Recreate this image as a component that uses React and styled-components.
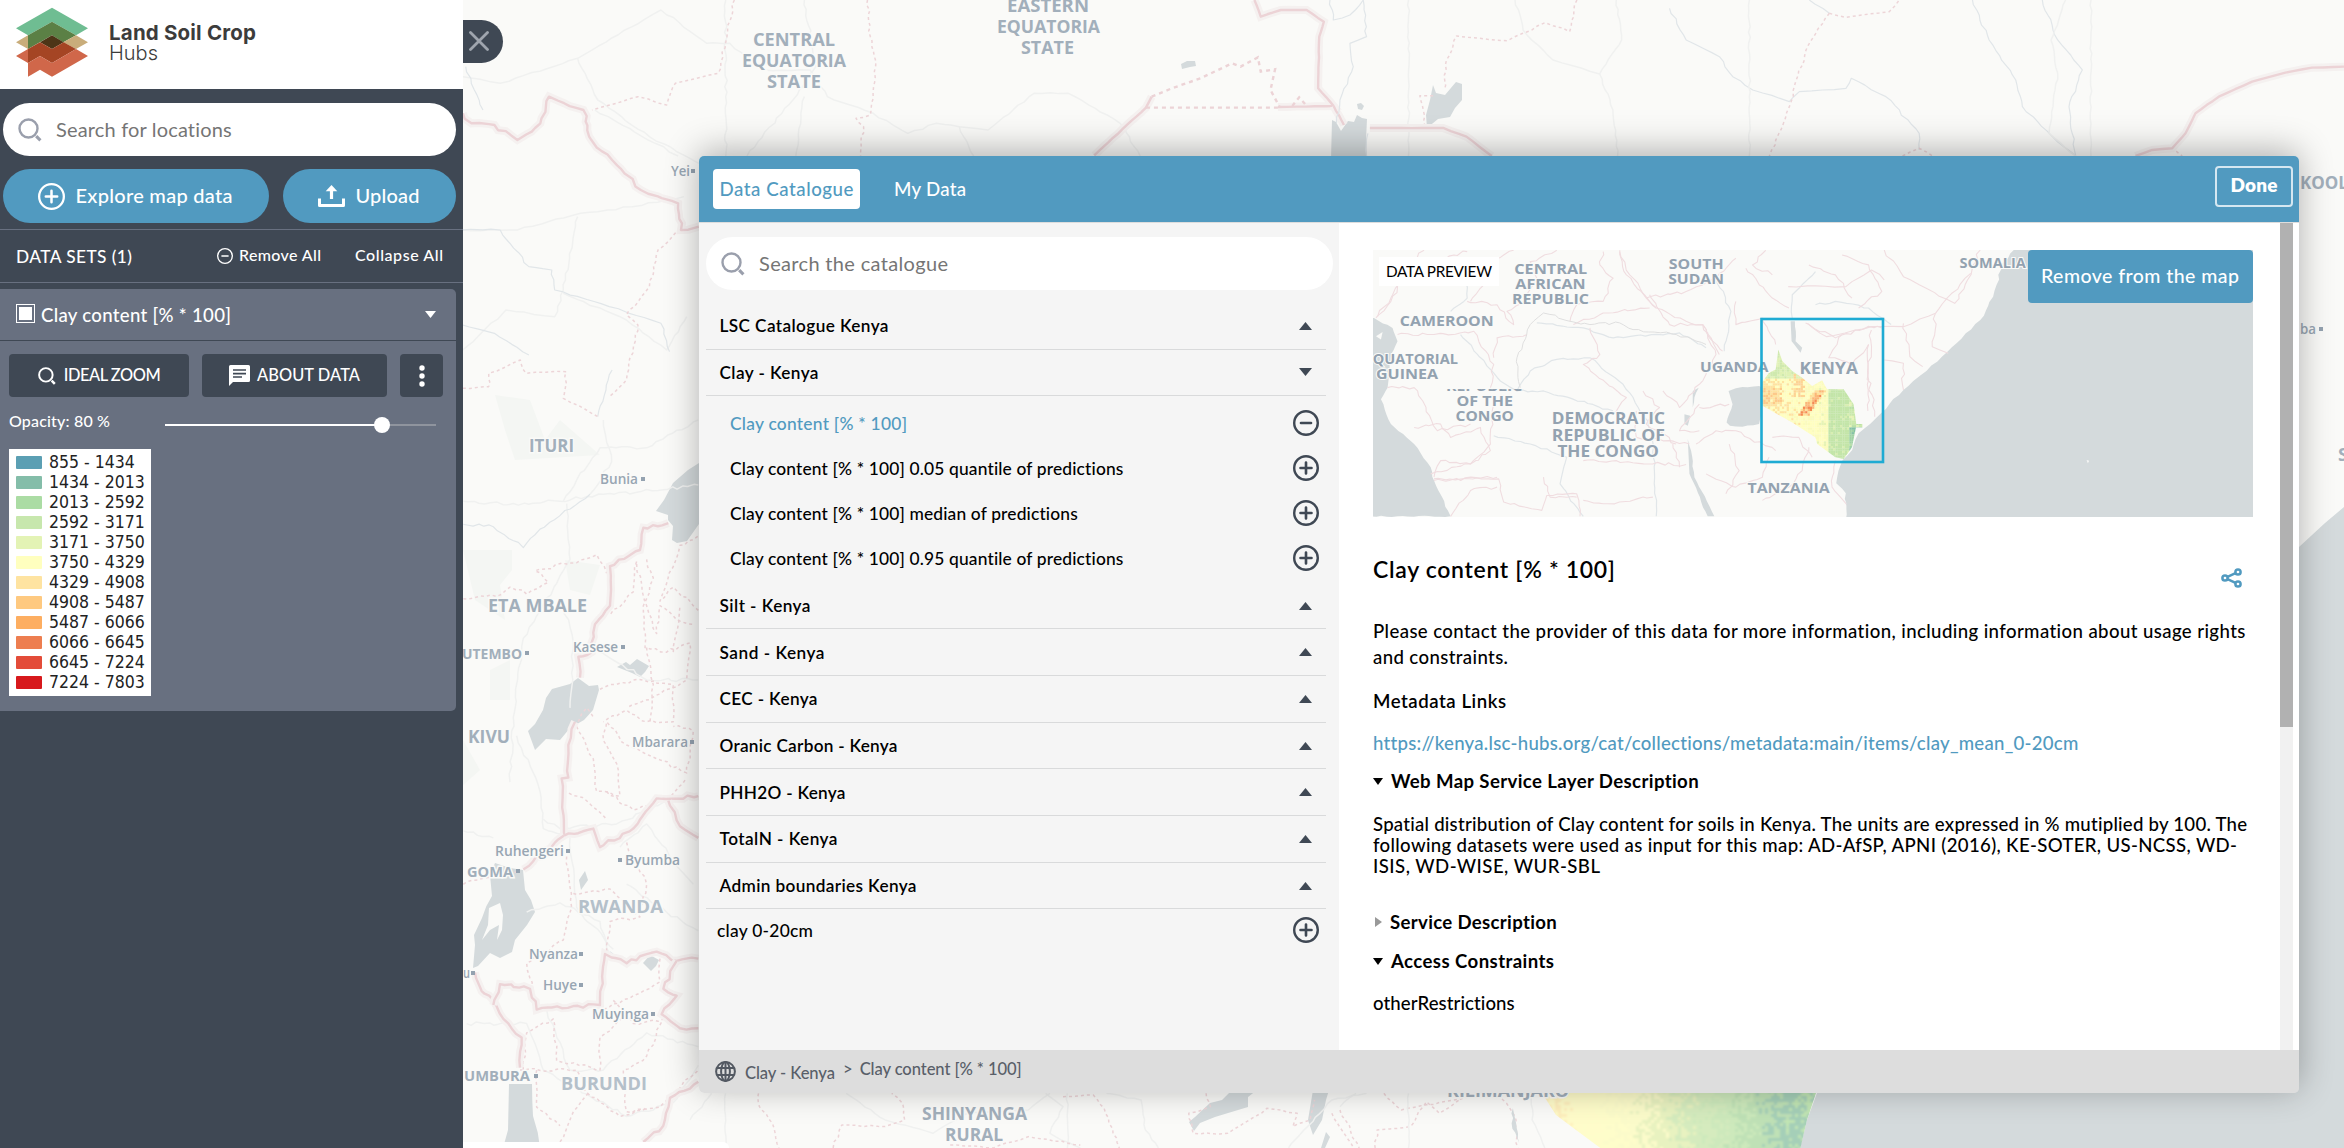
import React, { useLayoutEffect, useRef } from "react";
import styled, { createGlobalStyle, css } from "styled-components";

const Global = createGlobalStyle`
  html, body { margin: 0; padding: 0; }
  body { font-family: Lato, "Noto Sans", sans-serif; font-weight: 500; color: #000; background: #fafaf8; overflow: hidden; }
  * { box-sizing: border-box; }
  button { font: inherit; border: 0; margin: 0; padding: 0; background: none; color: inherit; cursor: pointer; }
`;

const slate = "#3f4854";
const blue = "#519ac0";

/* Text tracked so that it fills a given measure. */
const Line = styled.span`
  display: block;
  white-space: nowrap;
`;
function Fit({ w, children }) {
  const ref = useRef(null);
  useLayoutEffect(() => {
    const el = ref.current;
    const range = document.createRange();
    range.selectNodeContents(el);
    el.style.letterSpacing = "0px";
    const natural = range.getBoundingClientRect().width;
    el.style.letterSpacing = (w - natural) / Math.max(1, children.length - 1) + "px";
  }, [w, children]);
  return <Line ref={ref} style={{ width: w }}>{children}</Line>;
}

/* ---------- icons ---------- */
const Magnifier = ({ size = 24, color = "#9a9fac", sw = 2.4 }) => (
  <svg width={size} height={size} viewBox="0 0 24 24" fill="none" stroke={color} strokeWidth={sw}>
    <circle cx="10.5" cy="10.5" r="9" />
    <path d="M18.2 18.2 22.4 22.4" strokeWidth={sw * 1.3} />
  </svg>
);
const PlusCircle = ({ size = 26, color = slate, minus = false, sw = 2.4 }) => (
  <svg width={size} height={size} viewBox="0 0 26 26" fill="none" stroke={color} strokeWidth={sw}>
    <circle cx="13" cy="13" r={13 - sw / 2} />
    <path d={minus ? "M8 13H18" : "M7.5 13H18.5M13 7.5V18.5"} strokeLinecap="round" strokeWidth={sw * 1.1} />
  </svg>
);
const UploadIcon = () => (
  <svg width="27" height="23" viewBox="0 0 27 23" fill="none" stroke="#fff">
    <path d="M1.5 13.5V20.5H25.5V13.5" strokeWidth="3" strokeLinejoin="round" />
    <path d="M13.5 4V14" strokeWidth="3.2" />
    <path d="M13.5 0 19.3 6.2H7.7Z" fill="#fff" stroke="none" />
  </svg>
);
const Comment = () => (
  <svg width="21" height="21" viewBox="0 0 21 21">
    <path d="M1.5 0H19.5Q21 0 21 1.5V15.5Q21 17 19.5 17H4L0 21V1.5Q0 0 1.5 0Z" fill="#fff" />
    <path d="M4 5H17M4 8.6H17M4 12H13" stroke={slate} strokeWidth="1.7" />
  </svg>
);
const Dots = () => (
  <svg width="6" height="22" viewBox="0 0 6 22" fill="#fff">
    <circle cx="3" cy="3" r="2.7" /><circle cx="3" cy="11" r="2.7" /><circle cx="3" cy="19" r="2.7" />
  </svg>
);
const Tri = ({ dir = "up", w = 13, h = 8, color = slate }) => (
  <svg width={w} height={h} viewBox="0 0 10 10" preserveAspectRatio="none" fill={color}>
    <path d={{ up: "M0 10 5 0 10 10Z", down: "M0 0H10L5 10Z", right: "M0 0 10 5 0 10Z" }[dir]} />
  </svg>
);
const Globe = () => (
  <svg width="21" height="21" viewBox="0 0 21 21" fill="none" stroke="#535962" strokeWidth="2">
    <circle cx="10.5" cy="10.5" r="9.4" />
    <ellipse cx="10.5" cy="10.5" rx="4.4" ry="9.4" />
    <path d="M10.500 1V20M1.900 6.900H19.100M1.900 14.100H19.100" />
  </svg>
);
const Share = () => (
  <svg width="21" height="20" viewBox="0 0 21 20" fill="none" stroke={blue} strokeWidth="2.500">
    <circle cx="4" cy="10" r="2.600" /><circle cx="17" cy="4" r="2.600" /><circle cx="17" cy="16" r="2.600" />
    <path d="M6.500 8.800 14.500 5.200M6.500 11.200 14.500 14.800" />
  </svg>
);
const Cross = () => (
  <svg width="20" height="20" viewBox="0 0 20 20" stroke="#9fa5ae" strokeWidth="2.800" strokeLinecap="round">
    <path d="M1.500 1.500 18.500 18.500M18.500 1.500 1.500 18.500" />
  </svg>
);
const Logo = () => (
  <svg width="72" height="70" viewBox="48 22 216 210">
    <path fill="#6fbd92" d="M156 24 264 86 228 107 156 66 84 107 48 86Z" />
    <path fill="#5b8045" d="M156 66 228 107 190 128 156 107 84 148V107Z" />
    <path fill="#c9ad7b" d="M48 128 84 107V148ZM228 107 264 128 228 148 190 128Z" />
    <path fill="#4d3517" d="M156 107 191 128 156 148 120 128Z" />
    <path fill="#a54524" d="M120 128 156 148 191 128 228 148 156 190 120 169 84 190V148Z" />
    <path fill="#d0674a" d="M48 169 84 148V190ZM84 190 120 169 156 190 228 148 264 169 156 231 120 210 84 231Z" />
  </svg>
);

/* ---------- map drawing ---------- */
function random(seed) {
  let s = seed;
  return () => ((s = (s * 16807) % 2147483647) / 2147483647);
}
/* Breaks every segment of a line into small irregular steps. */
function rough(points, amount = 6, seed = 7) {
  const rnd = random(seed * 977 + points.length);
  const p = points.split(" ").map((s) => s.split(",").map(Number));
  let d = `M${p[0]}`;
  for (let i = 1; i < p.length; i++) {
    const [x0, y0] = p[i - 1];
    const [x1, y1] = p[i];
    const n = Math.max(1, Math.round(Math.hypot(x1 - x0, y1 - y0) / 16));
    for (let k = 1; k <= n; k++) {
      const j = k === n ? 0 : amount;
      d += `L${(x0 + ((x1 - x0) * k) / n + (rnd() - 0.5) * j).toFixed(1)} ${(y0 + ((y1 - y0) * k) / n + (rnd() - 0.5) * j).toFixed(1)}`;
    }
  }
  return d;
}
const lineKinds = {
  border: { stroke: "#ecd3d6", strokeWidth: 2.4 },
  halo: { stroke: "#f5f1f0", strokeWidth: 8 },
  region: { stroke: "#edd5d8", strokeWidth: 1.5, strokeDasharray: "3 3" },
  thin: { stroke: "#f0dde0", strokeWidth: 1.1 },
  river: { stroke: "#e1e6e9", strokeWidth: 1.2 },
  road: { stroke: "#f0f1f0", strokeWidth: 1.5 },
};
const Stroke = ({ kind, pts, amount }) =>
  pts.map((p, i) => (
    <React.Fragment key={i}>
      {kind === "border" && <path d={rough(p, amount, i + 3)} fill="none" vectorEffect="non-scaling-stroke" {...lineKinds.halo} />}
      <path d={rough(p, amount, i + 3)} fill="none" strokeLinejoin="round" vectorEffect="non-scaling-stroke" {...lineKinds[kind]} />
    </React.Fragment>
  ));
const Water = ({ pts, amount = 4 }) => pts.map((p, i) => <path key={i} d={rough(p, amount, i + 11) + "Z"} fill="#d4dadc" />);

const places = [
  ["CENTRAL", 753, 46, 82, 17], ["EQUATORIA", 742, 67, 104, 17], ["STATE", 767, 88, 54, 17],
  ["EASTERN", 1007, 12, 82, 17], ["EQUATORIA", 997, 33, 103, 17], ["STATE", 1021, 54, 53, 17],
  ["ITURI", 529, 452, 45, 17], ["ETA MBALE", 488, 612, 99, 17], ["KIVU", 468, 743, 42, 17],
  ["SHINYANGA", 922, 1120, 105, 17], ["RURAL", 945, 1141, 58, 17], ["KILIMANJARO", 1447, 1097, 122, 17],
  ["KOOL", 2300, 189, 48, 17], ["S", 2338, 461, 10, 17], ["GOMA", 467, 877, 46, 15],
  ["RWANDA", 578, 913, 85, 17], ["BURUNDI", 561, 1090, 86, 17], ["UTEMBO", 462, 659, 60, 15], ["UMBURA", 464, 1081, 66, 15],
];
const towns = [
  ["Yei", 671, 176, 19, 693], ["Bunia", 600, 484, 38, 643], ["Kasese", 573, 652, 45, 623], ["Mbarara", 632, 747, 56, 692],
  ["Ruhengeri", 495, 856, 69, 568], ["Byumba", 625, 865, 55, 620], ["Nyanza", 529, 959, 49, 581], ["Huye", 543, 990, 34, 581],
  ["Muyinga", 592, 1019, 57, 653], ["u", 463, 978, 7, 473], ["ba", 2300, 334, 16, 2321],
];
const squareOnly = [[518, 871], [527, 653], [536, 1076]];

function heat(x, y, r) {
  const scale = ["#fee3a0", "#fffec0", "#fbfbbc", "#e6f3b4", "#c9e8aa", "#b9e0a6", "#9fd2a4", "#84c1a6"];
  const ridge = Math.abs((x - 0.49) + (y - 0.47) * 0.75);
  if (y > 0.36 && y < 0.6 && ridge < 0.055) return r > 0.75 ? "#f58a52" : r > 0.35 ? "#fbb777" : "#fee09a";
  if (x < 0.2 && y > 0.35 && y < 0.5 && r > 0.7) return "#fdc98a";
  if (x > 0.3 && x < 0.42 && y < 0.42 && r > 0.5) return "#fdd494";
  if (y < 0.26) return r > 0.5 ? "#cfe9ae" : "#dff1b4";
  if (x > 0.64 && x < 0.86) return r > 0.85 ? "#d8eeb0" : "#c3e5a8";
  const v = x * 3.2 + (r - 0.5) * 1.6 + (x > 0.83 ? (y > 0.7 ? 3.4 : 1.2) : 0);
  return scale[Math.max(0, Math.min(7, Math.round(v)))];
}
const Cells = ({ x, y, w, h, size, fn }) => {
  const rnd = random(4242);
  const out = [];
  for (let j = 0; j < h / size; j++)
    for (let i = 0; i < w / size; i++)
      out.push(<rect key={i + "-" + j} x={x + i * size} y={y + j * size} width={size + 0.4} height={size + 0.4} fill={fn((i * size) / w, (j * size) / h, rnd())} />);
  return out;
};
const coast = (x, y, r) => {
  const scale = ["#feeebc", "#fffcca", "#fefdca", "#fbfbca", "#e8f2c0", "#d5ebbe", "#cde9bc", "#bfe1b6", "#a5cfb8", "#c2e6b4"];
  return scale[Math.max(0, Math.min(9, Math.round(x * 9 + (r - 0.5) * 1.3)))];
};

const MapSvg = styled.svg`
  display: block;
  font-family: "Open Sans", Lato, sans-serif;
`;
const BaseMap = () => (
  <MapSvg width="1881" height="1148" viewBox="463 0 1881 1148">
    <defs>
      <clipPath id="coastClip"><path d="M1540 1090 1556 1115 1576 1130 1603 1150H1800L1807 1120 1817 1090Z" /></clipPath>
      <filter id="soft"><feGaussianBlur stdDeviation="0.9" /></filter>
    </defs>
    <rect x="463" width="1881" height="1148" fill="#fafaf8" />
    <g fill="#f4f6f3">
      <path d="M495 395 530 400 545 440 560 420 600 455 515 460 505 430Z" />
      <path d="M463 550H512V570L500 585 505 620 475 600Z" />
      <path d="M490 670 510 660V700H490ZM463 740 480 770 463 785Z" />
      <path d="M565 560 600 565 590 595 570 590Z" />
    </g>
    <Water amount={3} pts={[
      "699,463 688,470 673,483 664,500 656,511 668,515 668,520 673,526 672,540 677,543 687,541 699,524",
      "528,731 535,750 546,739 560,740 570,728 584,720 593,710 599,690 598,685 589,686 578,678 570,684 552,689 546,698 543,710 535,724",
      "617,667 626,662 630,665 637,659 649,666 645,672 640,677 632,673",
      "495,863 510,868 523,870 525,890 535,912 527,925 515,940 512,952 500,958 490,953 478,966 473,968 475,945 474,935 482,918 492,896 490,875",
      "509,1084 532,1084 533,1116 540,1148 503,1148 508,1130",
    ]} />
    <Water amount={1} pts={[
      "1332,120 1336,122 1341,131 1348,121 1354,122 1357,115 1362,118 1367,119 1366,140 1367,160 1331,160",
      "1433,85 1436,93 1445,95 1456,82 1462,84 1462,100 1455,108 1450,117 1438,119 1427,128 1426,115 1430,100",
      "1189,1122 1195,1117 1210,1103 1222,1100 1232,1090 1257,1090 1248,1097 1248,1107 1215,1117 1200,1123 1194,1131",
      "1313,1090 1329,1090 1326,1100 1322,1120 1313,1135 1308,1120", "1326,1132 1330,1137 1325,1148 1321,1148", "1181,64 1187,61 1195,61 1196,66 1190,67 1182,69",
      "643,963 650,955 659,960 656,966 651,971", "579,880 585,871 588,880 581,890", "1357,104 1361,103 1364,106 1362,110 1358,109",
    ]} />
    <path d="M2344 507 2325 523 2299 547 2100 700 1870 950 1817 1093 1807 1120 1800 1148H2344Z" fill="#d4dadc" />
    <g fill="#fafaf8"><path d="M489 908 500 903 503 915 502 930 497 940 499 925 490 930 482 940 488 925Z" /></g>

    <g transform="translate(460 0) scale(.574 .3333)">
      <Stroke kind="road" amount={5} pts={[
        "5,230 70,250 205,175 300,80 350,30 430,130 470,130 530,210 610,210 640,290 720,340 780,400 830,370 870,380 920,390 1000,280 1060,280 1150,370 1185,468",
        "205,175 240,300 330,410 416,490", "235,330 340,430 380,468", "463,0 463,468", "600,0 620,200 580,300 500,468", "600,290 585,468", "870,380 895,468",
        "5,690 100,690 210,640 300,620 390,590", "205,650 180,870 165,950 80,930 5,1050", "180,880 290,960 360,1050 395,950",
      ]} />
      <Stroke kind="river" amount={5} pts={["10,200 25,270 40,330", "5,690 70,690 120,800 160,810 165,870 260,920 350,970 365,1055", "5,975 60,1000 120,1065", "265,1110 240,1250"]} />
      <Stroke kind="region" amount={5} pts={[
        "478,0 465,110 450,220 375,250 360,315 310,290 230,330", "710,0 715,110 724,200 715,345 690,355 703,380 698,468",
        "385,690 345,750 330,860 290,945 310,975 290,1140 260,1190", "5,1165 50,1160 50,1120 105,1080 115,1120 185,1115 180,1195 240,1250",
      ]} />
      <Stroke kind="border" amount={9} pts={["5,340 20,370 60,375 100,420 125,395 140,370 155,290 215,330 225,410 265,480 315,570 380,610 385,690 416,680"]} />
      <Stroke kind="border" amount={1} pts={["1105,466 1195,323 1205,290", "1425,321 1522,318 1495,265 1497,110 1505,65 1475,30 1430,30 1395,50 1384,0", "1522,318 1540,375"]} />
      <g fill="none" stroke="#ecd3d6" strokeWidth="2.400" strokeDasharray="4 4">
        <path vectorEffect="non-scaling-stroke" d="M1195 323H1425M1205 290 1240 265 1290 235 1345 190 1360 200 1390 172 1395 215 1420 208 1412 270 1428 321M1450 318 1462 292 1475 318" />
      </g>
    </g>

    <g transform="translate(1300 0) scale(.6658 .3333)">
      <Stroke kind="river" amount={4} pts={[
        "45,0 50,60 75,45 95,0 100,110 75,130 80,200 60,300 55,370", "555,25 580,120 630,170 650,230 680,270 735,305 750,275 820,265 828,235 880,290 930,400 930,450",
        "1010,0 1035,120 1075,240 1085,320 1130,410 1165,468", "1115,0 1138,120 1175,210 1155,320 1165,468", "765,0 795,40", "100,468 102,400",
      ]} />
      <Stroke kind="road" amount={3} pts={["323,0 335,90 380,180 450,222 470,330 477,468", "475,0 483,120 450,222", "163,0 163,468", "675,0 675,468", "1188,0 1188,468", "1150,0 1128,120 1138,220 1125,400 1165,468"]} />
      <Stroke kind="region" amount={4} pts={["416,0 405,95 368,68 312,122 235,108 220,180 217,270", "795,40 760,150 735,320 705,468", "200,287 180,287 188,380", "795,40 820,52 885,35 900,0", "905,468 930,445 950,468", "1310,440 1325,468"]} />
      <Stroke kind="border" amount={1} pts={["105,384 215,384 250,410 288,468", "1255,468 1280,450 1310,445 1330,400 1345,340 1380,290 1430,245 1480,218 1520,203 1568,200"]} />
    </g>

    <g transform="translate(460 420) scale(.3333 .4643)">
      <Stroke kind="road" amount={8} pts={[
        "10,175 160,180 300,175 430,160 610,150 715,140", "310,175 420,60 560,60 715,0", "430,0 455,90 390,160", "150,780 160,640 190,470 240,410 330,300 320,180",
        "310,400 340,480 330,620", "420,500 560,560 715,560", "250,860 300,880 470,870 620,820", "330,900 350,1050 460,1140", "500,1000 620,1060 715,1100",
        "20,1300 200,1300 250,1400 500,1500 640,1470 715,1390", "170,680 240,800 250,880 320,900", "480,920 560,870 700,1000", "200,1060 300,1040 420,1080 450,1150", "260,1270 330,1400 430,1400 560,1320 715,1350", "10,885 100,900",
      ]} />
      <Stroke kind="river" amount={8} pts={["10,225 100,230 190,275 240,235 390,160", "450,1145 520,1170 560,1150 600,1150"]} />
      <Stroke kind="region" amount={8} pts={[
        "10,385 110,380 150,360 200,375 265,350 225,325 320,310 410,290 440,330", "530,305 520,370 450,420", "530,310 560,400 590,460 600,400 650,430 700,440",
        "715,410 640,360 600,390 660,270 715,250", "560,300 580,340 550,400 555,490 620,500 690,480 680,560 600,590 500,620", "420,580 520,560 640,570 640,650 560,650 500,625 430,650",
        "350,660 400,730 410,800 480,810 470,740 430,690 440,650 500,700 560,720 680,760 700,670 640,660", "310,800 380,820 440,860", "440,800 520,840 620,820 680,770",
        "10,1000 180,970", "320,940 335,1050 310,1120 200,1170 230,1270", "340,1020 450,1010 540,1070 450,1080 440,1150", "500,910 560,1000 540,1060",
        "600,1160 600,1210 520,1240 430,1270", "460,1250 520,1300 610,1290 560,1370 490,1400 500,1490 600,1480 715,1400", "190,1400 200,1320 280,1290 290,1380 420,1400 420,1330 500,1280",
        "180,1400 350,1400 400,1440 340,1490 300,1555", "370,1440 480,1500 560,1480", "230,1400 230,1480 300,1520", "355,650 380,620 400,640", "640,500 660,400", "560,490 580,570 570,650",
      ]} />
      <Stroke kind="border" amount={8} pts={[
        "625,222 550,232 540,280 450,315 450,400 405,440 395,500 355,510 360,555", "345,650 325,700 325,770 305,772 312,895 400,880 420,920 520,880 590,815 715,810", "312,895 190,968", "625,820 660,875 715,900",
        "45,1190 65,1230 100,1250 130,1290 185,1330 180,1395", "100,1260 120,1215 210,1225 230,1270 420,1260 435,1150 500,1170 540,1155 590,1145 650,1165 715,1160", "650,1165 610,1225 650,1240 605,1280 660,1310 715,1310", "550,1555 610,1520 630,1460 715,1425",
      ]} />
    </g>

    <g transform="translate(690 700) scale(.4337 .3333)">
      <Stroke kind="road" amount={5} pts={["0,1260 50,1180", "360,1180 450,1260 560,1300 640,1240 780,1230 830,1180", "820,1180 860,1220 830,1300 900,1344", "960,1180 1040,1200 1050,1290 1080,1344", "1380,1344 1480,1200 1560,1180", "82,1180 82,1344", "870,1180 870,1344"]} />
      <Stroke kind="region" amount={5} pts={["158,1180 160,1220 190,1270 205,1344", "330,1344 350,1275 450,1280 495,1260 490,1210 465,1180", "600,1335 700,1344 780,1310 900,1335", "860,1190 930,1185 955,1225 990,1344", "1190,1180 1200,1220 1150,1240 1160,1300 1240,1300 1330,1225 1400,1240 1390,1280 1430,1260 1440,1200", "1480,1240 1530,1344", "1600,1180 1640,1230 1760,1200 1840,1180"]} />
    </g>
    <g transform="translate(1340 860) scale(.6403 .3333)">
      <Stroke kind="region" amount={5} pts={["0,750 30,864", "55,864 58,810 110,800 135,725 155,760 190,715", "250,700 275,780 278,864"]} />
      <Water pts={["270,745 268,790 280,850 275,790"]} />
      <Stroke kind="road" amount={3} pts={["300,700 300,780 320,864", "107,700 107,864", "0,740 25,700"]} />
    </g>
    <g clipPath="url(#coastClip)" filter="url(#soft)">
      <Cells x={1540} y={1090} w={278} h={60} size={3} fn={coast} />
    </g>

    <g fontWeight="700" fill="#a6b2bd" stroke="#fafaf8" strokeWidth="3" paintOrder="stroke">
      {places.map(([t, x, y, w, s], i) => (
        <text key={i} x={x} y={y} textLength={w} lengthAdjust="spacingAndGlyphs" fontSize={s} fill={t === "RWANDA" || t === "BURUNDI" ? "#b4c0ca" : "#a2afbb"}>{t}</text>
      ))}
      {towns.map(([t, x, y, w]) => (
        <text key={t} x={x} y={y} textLength={w} lengthAdjust="spacingAndGlyphs" fontSize="14" fontWeight="600" fill="#98a6b3">{t}</text>
      ))}
    </g>
    <g fill="#94a2b0">
      {towns.map(([t, , y, , d]) => <rect key={t} x={d - 2} y={y - 7} width="4" height="4" />)}
      {squareOnly.map(([x, y]) => <rect key={x} x={x - 2} y={y - 2} width="4" height="4" />)}
    </g>
  </MapSvg>
);

const previewPlaces = [
  ["CENTRAL", 432, 87, 220, 42], ["AFRICAN", 435, 132, 212, 42], ["REPUBLIC", 425, 178, 232, 42], ["SOUTH", 898, 72, 165, 42], ["SUDAN", 896, 118, 168, 42],
  ["CAMEROON", 87, 243, 283, 42], ["QUATORIAL", 5, 360, 257, 42], ["GUINEA", 15, 405, 187, 42], ["OF THE", 258, 485, 170, 42], ["CONGO", 255, 530, 176, 42],
  ["DEMOCRATIC", 545, 540, 341, 46], ["REPUBLIC OF", 545, 590, 341, 46], ["THE CONGO", 562, 640, 306, 46], ["UGANDA", 992, 384, 206, 42],
  ["KENYA", 1292, 388, 176, 48], ["TANZANIA", 1135, 747, 248, 42], ["SOMALIA", 1774, 70, 200, 42],
];
const PreviewSvg = styled(MapSvg)`
  flex: none;
`;
const PreviewMap = () => (
  <PreviewSvg width="880" height="267" viewBox="0 0 880 267">
    <defs>
      <clipPath id="clayClip"><path d="M1228 315 1240 350 1270 380 1300 400 1330 425 1360 408 1375 435H1425L1455 480 1463 540H1482V550H1462L1450 610 1425 645 1400 640 1345 600 1340 580 1270 535 1180 485 1178 415 1200 385 1220 375Z" /></clipPath>
      <clipPath id="cutClip"><rect x="200" y="434" width="300" height="8" /></clipPath>
      <filter id="softer"><feGaussianBlur stdDeviation="1.600" /></filter>
    </defs>
    <rect width="880" height="267" fill="#fafaf8" />
    <g transform="translate(-2 -5) scale(.3317)">
      <Water pts={["9,220 65,250 80,290 60,330 50,430 30,465 60,540 130,600 180,670 190,710 240,818 0,818 0,220", "1078,440 1100,432 1170,425 1180,430 1182,480 1170,540 1120,548 1082,545 1072,535 1090,480", "955,585 965,620 975,700 1035,818 1015,818 960,690", "945,510 962,515 955,545 945,540", "1265,230 1278,230 1280,290 1300,310 1295,325 1268,290", "970,440 988,430 975,460 970,490"]} />
      <path d="M15 275 35 262 30 285Z" fill="#fafaf8" />
      <Stroke kind="river" amount={7} pts={["440,440 480,380 560,345 660,340 760,420 850,560 855,700 860,818", "500,235 640,250 730,280 845,270 930,265 1010,310", "370,575 480,600 590,640 570,720 640,818", "270,270 390,410 440,440 520,440 730,500", "240,200 290,160 290,100", "1040,100 1085,200 1065,320", "1340,180 1400,170 1500,190 1568,240", "1270,220 1270,150 1340,80"]} />
      <Stroke kind="thin" amount={10} pts={[
        "15,220 60,170 90,110 170,100 200,60 250,30 290,20", "300,170 340,120 330,60 400,30 430,16", "470,160 500,100 480,50 560,16", "600,230 620,180 700,170 730,100 690,60 700,20",
        "290,170 380,180 430,240 410,200 470,170", "80,270 190,270 310,260 370,360 360,430", "370,340 380,280 470,270", "660,250 690,330 640,360 770,460 730,510", "820,440 870,490 830,540 920,600",
        "1000,240 1040,330 990,420 930,490 880,440", "840,150 900,240 1000,240 1030,290 1060,320", "830,160 950,140 1040,100 1100,40", "1100,170 1100,240 1180,220", "1130,70 1200,150 1260,190", "1190,16 1150,60 1210,90",
        "50,430 130,430 200,560 300,540", "130,550 210,540 240,580 330,550 360,620 300,660 180,690", "190,710 380,700", "240,818 300,740 380,730", "640,650 950,662", "800,500 800,580 960,600", "910,600 930,670",
        "990,490 1080,480", "980,600 1040,560 1100,560 1220,620", "1010,690 1100,730 1180,700 1200,640", "1070,750 1110,680 1080,600", "1180,770 1260,730 1300,680 1320,610", "1400,650 1390,730 1440,790", "1210,580 1290,580 1330,640", "640,770 700,780 850,760",
        "1420,30 1500,60 1540,140 1470,190", "1320,60 1400,90 1450,160", "750,20 780,90 830,160 860,190", "1420,270 1380,340 1450,360 1500,300", "520,700 540,760 620,760",
      ]} />
      <g stroke="#ebd0d4">
        <Stroke kind="thin" amount={9} pts={["20,215 60,160 110,60 160,16", "750,16 770,90 860,190 950,230 1000,240 1050,330", "610,240 700,205 840,190", "190,705 385,705 400,775 515,800 530,755 620,750 630,818", "190,700 210,650 300,660 360,600 370,480", "1180,220 1220,300", "1310,235 1400,280 1500,245 1540,250", "1500,300 1498,500", "990,480 930,560 990,560"]} />
      </g>
      <path d={rough("450,430 440,340 480,240 520,205 600,230 660,240 750,235 790,255 920,270 1010,300", 8)} fill="none" stroke="#dfdfdf" strokeWidth="3" />
    </g>
    <g transform="translate(-33 -110) scale(.6403 .3333)">
      <Water pts={["1055,325 1035,370 1020,470 1000,540 940,650 880,750 845,820 810,880 800,930 785,960 775,1030 790,1060 790,1140 1430,1140 1430,325"]} />
      <Stroke kind="thin" amount={6} pts={["850,330 880,410 960,490 980,420 1000,330", "730,550 760,590 830,560 880,560 930,520 985,400", "830,570 825,700 835,830", "880,550 890,650 910,680", "930,520 925,620 950,640", "850,660 880,670 880,750", "700,440 790,440 830,390 850,420"]} />
      <path d="M1166 960 1170 962 1168 970Z" fill="#fafaf8" />
    </g>
    <g transform="translate(-2 -5) scale(.3317)">
      <g clipPath="url(#clayClip)"><g filter="url(#softer)"><Cells x={1176} y={312} w={308} h={336} size={7} fn={heat} /></g></g>
    </g>
    <g transform="translate(-2 -5) scale(.3317)" fontWeight="700" fill="#93a2b0" stroke="#fafaf8" paintOrder="stroke">
      {previewPlaces.map(([t, x, y, w, s], i) => <text key={i} x={x} y={y} textLength={w} lengthAdjust="spacingAndGlyphs" fontSize={s} strokeWidth={t === "KENYA" ? 0 : 6}>{t}</text>)}
      <text x="226" y="439" textLength="230" lengthAdjust="spacingAndGlyphs" fontSize="42" clipPath="url(#cutClip)">REPUBLIC</text>
    </g>
    <rect x="388.500" y="69" width="121.500" height="143" fill="none" stroke="#1fabd3" strokeWidth="2.600" />
  </PreviewSvg>
);

/* ---------- layout ---------- */
const Page = styled.div`
  display: flex;
  width: 2344px;
  height: 1148px;
  overflow: hidden;
`;
const Sidebar = styled.aside`
  width: 463px;
  flex: none;
  background: ${slate};
  color: #fff;
`;
const Brand = styled.header`
  display: flex;
  height: 89px;
  padding: 7px 0 0 16px;
  gap: 21px;
  background: #fff;
  color: #3c3c3b;
`;
const BrandName = styled.div`
  padding-top: 15px;
  line-height: 21px;
  font-family: Inter, Lato, sans-serif;
`;
const Bold = styled.div`
  font-weight: 700;
  font-size: 20.500px;
`;
const Light = styled.div`
  font-weight: 300;
  font-size: 20px;
`;
const SearchBox = styled.div`
  display: flex;
  align-items: center;
  height: 53px;
  gap: 14px;
  padding-left: 15px;
  border-radius: 27px;
  background: #fff;
  color: #757575;
  font-size: 20px;
  font-weight: 400;
  margin: ${(p) => p.$margin};
  ${Line} { padding-bottom: 2px; }
`;
const Actions = styled.div`
  display: flex;
  gap: 14px;
  margin: 13px 7px 6px 3px;
`;
const Pill = styled.button`
  display: flex;
  align-items: center;
  justify-content: center;
  gap: 11px;
  width: ${(p) => p.$w}px;
  height: 54px;
  padding-right: 2px;
  border-radius: 27px;
  background: ${blue};
  font-size: 20px;
  ${Line} { padding-bottom: 2px; }
`;
const DataHead = styled.div`
  display: flex;
  align-items: center;
  height: 54px;
  padding: 0 20px 0 16px;
  border-top: 1px solid #687080;
  border-bottom: 1px solid #687080;
  font-size: 17.300px;
`;
const HeadAction = styled.button`
  display: flex;
  align-items: center;
  gap: 6px;
  margin-left: ${(p) => p.$ml}px;
  font-size: 16px;
  ${Line} { padding-bottom: 3px; }
`;
const Card = styled.section`
  width: 456px;
  height: 422px;
  margin-top: 6px;
  border-radius: 0 5px 5px 0;
  background: #687080;
`;
const CardHead = styled.div`
  display: flex;
  align-items: center;
  height: 52px;
  padding: 0 20px 0 16px;
  border-bottom: 1px solid ${slate};
  font-size: 18.600px;
`;
const Check = styled.span`
  width: 19px;
  height: 19px;
  margin: 0 6px 3px 0;
  border: 1.500px solid #fff;
  padding: 2px;
  &::before { content: ""; display: block; height: 100%; background: #fff; }
`;
const Push = styled.span`
  margin-left: auto;
  display: flex;
`;
const CardActions = styled.div`
  display: flex;
  gap: 13px;
  padding: 13px 9px 0;
`;
const DarkButton = styled.button`
  display: flex;
  align-items: center;
  justify-content: center;
  gap: ${(p) => p.$gap || 0}px;
  width: ${(p) => p.$w}px;
  height: 43px;
  border-radius: 4px;
  background: ${slate};
  font-size: 16.400px;
  ${Line} { padding-bottom: 2px; }
`;
const OpacityRow = styled.div`
  display: flex;
  align-items: center;
  height: 52px;
  padding-left: 9px;
  font-size: 16px;
`;
const OpacityLabel = styled.div`
  width: 156px;
  padding-bottom: 5px;
`;
const Slider = styled.div`
  position: relative;
  width: 271px;
  height: 2px;
  margin-top: 4px;
  background: linear-gradient(90deg, #fff 80%, #8f949e 80%);
  &::after { content: ""; position: absolute; left: 209px; top: -7px; width: 16px; height: 16px; border-radius: 50%; background: #fff; }
`;
const Legend = styled.div`
  width: 142px;
  height: 247px;
  margin-left: 9px;
  padding: 3px 0 0 7px;
  background: #fff;
`;
const LegendRow = styled.div`
  display: flex;
  align-items: center;
  height: 20px;
  gap: 7px;
  color: #222;
  font: 17.500px/20px "DejaVu Sans Condensed", "DejaVu Sans", sans-serif;
  &::before { content: ""; width: 26px; height: 13px; border-radius: 1px; background: ${(p) => p.$c}; }
`;

const MapArea = styled.main`
  position: relative;
  flex: 1;
  min-width: 0;
`;
const Toggle = styled.button`
  position: absolute;
  left: 0;
  top: 20px;
  display: flex;
  align-items: center;
  width: 40px;
  height: 43px;
  padding: 0 0 2px 6px;
  border-radius: 0 22px 22px 0;
  background: ${slate};
`;
const BottomTab = styled.div`
  position: absolute;
  left: 0;
  bottom: 0;
  width: 266px;
  height: 6px;
  border-top-right-radius: 12px;
  background: #fff;
`;
const Modal = styled.div`
  position: absolute;
  left: 236px;
  top: 156px;
  width: 1600px;
  height: 937px;
  display: flex;
  flex-direction: column;
  border-radius: 5px;
  overflow: hidden;
`;
const Shade = styled.div`
  position: absolute;
  left: 236px;
  top: 156px;
  width: 1600px;
  height: 937px;
  border-radius: 5px;
  box-shadow: 0 -5px 34px rgba(0, 0, 0, 0.3);
`;
const ModalHead = styled.div`
  display: flex;
  height: 67px;
  padding: 13px 6px 0 14px;
  background: ${blue};
  border-bottom: 1px solid #ddd;
`;
const Tab = styled.button`
  display: flex;
  justify-content: center;
  align-items: center;
  height: 40px;
  width: ${(p) => p.$w}px;
  border-radius: 4px;
  font-size: 18.700px;
  color: #fff;
  ${(p) => p.$active && css`background: #fff; color: ${blue};`}
  ${Line} { padding-bottom: 1px; }
`;
const Done = styled.button`
  display: flex;
  justify-content: center;
  align-items: center;
  width: 78px;
  height: 41px;
  margin: -3px 0 0 auto;
  border: 2px solid #d5e7f1;
  border-radius: 4px;
  color: #fff;
  font-size: 19px;
  font-weight: 800;
  padding-bottom: 4px;
`;
const ModalBody = styled.div`
  display: flex;
  height: 827px;
`;
const Catalogue = styled.div`
  width: 640px;
  padding: 14px 6px 0 7px;
  background: #f5f5f5;
`;
const Group = styled.div`
  display: flex;
  align-items: center;
  justify-content: space-between;
  width: 620px;
  height: 46.670px;
  padding: 0 14px 0 13.500px;
  border-bottom: 1px solid #d9dadb;
  font-size: 17.200px;
  font-weight: 600;
`;
const Items = styled.div`
  padding: 4.500px 0 2px;
`;
const Item = styled.div`
  display: flex;
  align-items: center;
  justify-content: space-between;
  width: 613px;
  height: ${(p) => p.$h || 45}px;
  padding-left: ${(p) => p.$indent}px;
  font-size: 17.400px;
  font-weight: 500;
  color: ${(p) => (p.$active ? blue : "#000")};
`;
const Detail = styled.div`
  flex: 1;
  padding: 27px 0 0 34px;
  background: #fff;
`;
const ScrollTrack = styled.div`
  width: 13px;
  margin-right: 6px;
  background: #f1f1f1;
  &::before { content: ""; display: block; height: 504px; background: #b1b1b1; }
`;
const ModalRight = styled.div`
  display: flex;
  flex: 1;
  background: #fff;
`;
const Preview = styled.div`
  position: relative;
  width: 880px;
  height: 267px;
`;
const PreviewTag = styled.div`
  position: absolute;
  left: 6px;
  top: 7px;
  height: 29px;
  width: 120px;
  padding-left: 7px;
  line-height: 28px;
  background: #fff;
  font-size: 15.300px;
  font-weight: 400;
`;
const RemoveButton = styled.button`
  position: absolute;
  right: 0;
  top: 0;
  display: flex;
  justify-content: center;
  width: 225px;
  height: 53px;
  line-height: 51px;
  padding-right: 1px;
  border-radius: 4px;
  background: ${blue};
  color: #fff;
  font-size: 19.500px;
`;
const TitleRow = styled.div`
  display: flex;
  align-items: center;
  justify-content: space-between;
  width: 880px;
  height: 60px;
  margin-top: 22px;
  padding-right: 11px;
  font-size: 23px;
  font-weight: 600;
`;
const ShareSlot = styled.span`
  display: flex;
  padding-top: 18px;
`;
const Para = styled.div`
  margin-top: ${(p) => p.$mt}px;
  line-height: ${(p) => p.$lh || 26}px;
  font-size: 18.600px;
  font-weight: ${(p) => p.$weight || 500};
  color: ${(p) => p.$color || "#000"};
`;
const Summary = styled(Para)`
  display: flex;
  align-items: center;
  gap: 8px;
  font-weight: 700;
  svg { margin-left: ${(p) => p.$in || 0}px; }
`;
const Footer = styled.div`
  display: flex;
  height: 43px;
  padding: 0 16px;
  background: #ddd;
  color: #595f69;
  font-size: 16.600px;
  font-weight: 500;
`;
const Crumb = styled.span`
  display: block;
  line-height: 20px;
  margin: ${(p) => p.$top}px 0 0 ${(p) => p.$ml}px;
`;

const legend = [
  ["#5b9fb3", "855 - 1434"], ["#84bda9", "1434 - 2013"], ["#abdca4", "2013 - 2592"], ["#c7e7ad", "2592 - 3171"],
  ["#e3f3b5", "3171 - 3750"], ["#ffffbf", "3750 - 4329"], ["#fee3a1", "4329 - 4908"], ["#fec980", "4908 - 5487"],
  ["#fdae61", "5487 - 6066"], ["#ed7e50", "6066 - 6645"], ["#e34c39", "6645 - 7224"], ["#d7191c", "7224 - 7803"],
];
const items = [
  ["Clay content [% * 100]", 177], ["Clay content [% * 100] 0.05 quantile of predictions", 394],
  ["Clay content [% * 100] median of predictions", 348], ["Clay content [% * 100] 0.95 quantile of predictions", 394],
];
const groups = [
  ["Silt - Kenya", 91], ["Sand - Kenya", 105], ["CEC - Kenya", 98], ["Oranic Carbon - Kenya", 178],
  ["PHH2O - Kenya", 126], ["TotalN - Kenya", 118], ["Admin boundaries Kenya", 197],
];

export default function App() {
  return (
    <Page>
      <Global />
      <Sidebar>
        <Brand>
          <Logo />
          <BrandName>
            <Bold><Fit w={147}>Land Soil Crop</Fit></Bold>
            <Light><Fit w={49}>Hubs</Fit></Light>
          </BrandName>
        </Brand>
        <SearchBox $margin="14px 7px 0 3px">
          <Magnifier /><Fit w={176}>Search for locations</Fit>
        </SearchBox>
        <Actions>
          <Pill $w={266}><PlusCircle size={27} color="#fff" sw={2.2} /><Fit w={157}>Explore map data</Fit></Pill>
          <Pill $w={173}><UploadIcon /><Fit w={64}>Upload</Fit></Pill>
        </Actions>
        <DataHead>
          <Fit w={116}>DATA SETS (1)</Fit>
          <HeadAction $ml={85}><PlusCircle size={16} color="#fff" minus sw={2.2} /><Fit w={82}>Remove All</Fit></HeadAction>
          <HeadAction $ml={34}><Fit w={88}>Collapse All</Fit></HeadAction>
        </DataHead>
        <Card>
          <CardHead>
            <Check /><Fit w={190}>Clay content [% * 100]</Fit>
            <Push><Tri dir="down" w={11} h={7} color="#fff" /></Push>
          </CardHead>
          <CardActions>
            <DarkButton $w={180} $gap={8}><Magnifier size={18} color="#fff" sw={2.6} /><Fit w={97}>IDEAL ZOOM</Fit></DarkButton>
            <DarkButton $w={185} $gap={7}><Comment /><Fit w={103}>ABOUT DATA</Fit></DarkButton>
            <DarkButton $w={43}><Dots /></DarkButton>
          </CardActions>
          <OpacityRow>
            <OpacityLabel><Fit w={101}>Opacity: 80 %</Fit></OpacityLabel>
            <Slider />
          </OpacityRow>
          <Legend>
            {legend.map(([c, t]) => <LegendRow key={t} $c={c}>{t}</LegendRow>)}
          </Legend>
        </Card>
      </Sidebar>
      <MapArea>
        <BaseMap />
        <Toggle><Cross /></Toggle>
        <BottomTab />
        <Shade />
        <Modal>
          <ModalHead>
            <Tab $w={147} $active><Fit w={134}>Data Catalogue</Fit></Tab>
            <Tab $w={140}><Fit w={72}>My Data</Fit></Tab>
            <Done><Fit w={47}>Done</Fit></Done>
          </ModalHead>
          <ModalBody>
            <Catalogue>
              <SearchBox $margin="0 0 13px"><Magnifier /><Fit w={189}>Search the catalogue</Fit></SearchBox>
              <Group><Fit w={169}>LSC Catalogue Kenya</Fit><Tri /></Group>
              <Group><Fit w={99}>Clay - Kenya</Fit><Tri dir="down" /></Group>
              <Items>
                {items.map(([t, w], i) => (
                  <Item key={t} $indent={24} $active={i === 0}><Fit w={w}>{t}</Fit><PlusCircle minus={i === 0} /></Item>
                ))}
              </Items>
              {groups.map(([t, w]) => <Group key={t}><Fit w={w}>{t}</Fit><Tri /></Group>)}
              <Item $indent={11} $h={42}><Fit w={96}>clay 0-20cm</Fit><PlusCircle /></Item>
            </Catalogue>
            <ModalRight>
              <Detail>
                <Preview>
                  <PreviewMap />
                  <PreviewTag><Fit w={106}>DATA PREVIEW</Fit></PreviewTag>
                  <RemoveButton><Fit w={198}>Remove from the map</Fit></RemoveButton>
                </Preview>
                <TitleRow><Fit w={242}>Clay content [% * 100]</Fit><ShareSlot><Share /></ShareSlot></TitleRow>
                <Para $mt={19}>
                  <Fit w={873}>Please contact the provider of this data for more information, including information about usage rights</Fit>
                  <Fit w={135}>and constraints.</Fit>
                </Para>
                <Para $mt={18} $weight={600}><Fit w={133}>Metadata Links</Fit></Para>
                <Para $mt={16} $color={blue}><Fit w={705}>https://kenya.lsc-hubs.org/cat/collections/metadata:main/items/clay_mean_0-20cm</Fit></Para>
                <Summary $mt={12}><Tri dir="down" w={10} h={7} color="#000" /><Fit w={308}>Web Map Service Layer Description</Fit></Summary>
                <Para $mt={20} $lh={21}>
                  <Fit w={875}>Spatial distribution of Clay content for soils in Kenya. The units are expressed in % mutiplied by 100. The</Fit>
                  <Fit w={864}>following datasets were used as input for this map: AD-AfSP, APNI (2016), KE-SOTER, US-NCSS, WD-</Fit>
                  <Fit w={227}>ISIS, WD-WISE, WUR-SBL</Fit>
                </Para>
                <Summary $mt={32} $in={2}><Tri dir="right" w={7} h={10} color="#999" /><Fit w={167}>Service Description</Fit></Summary>
                <Summary $mt={13}><Tri dir="down" w={10} h={7} color="#000" /><Fit w={163}>Access Constraints</Fit></Summary>
                <Para $mt={16}><Fit w={142}>otherRestrictions</Fit></Para>
              </Detail>
              <ScrollTrack />
            </ModalRight>
          </ModalBody>
          <Footer>
            <Crumb $top={11} $ml={0}><Globe /></Crumb>
            <Crumb $top={13} $ml={9}><Fit w={90}>Clay - Kenya</Fit></Crumb>
            <Crumb $top={9} $ml={8}>&gt;</Crumb>
            <Crumb $top={9} $ml={7}><Fit w={162}>Clay content [% * 100]</Fit></Crumb>
          </Footer>
        </Modal>
      </MapArea>
    </Page>
  );
}
